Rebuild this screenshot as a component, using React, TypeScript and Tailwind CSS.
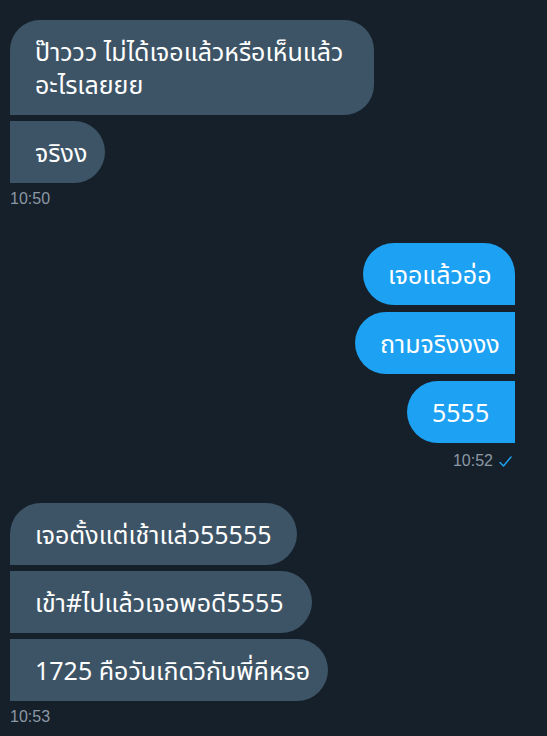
import React from "react";

const font = { fontFamily: '"Noto Sans Thai", "Noto Sans", "Liberation Sans", sans-serif' };

function Bubble({
  children,
  side,
  corners,
  width,
}: {
  children: React.ReactNode;
  side: "left" | "right";
  corners: string;
  width: string;
}) {
  const color = side === "left" ? "bg-[#3d5466]" : "bg-[#1da1f2]";
  return (
    <div
      className={`${color} ${corners} ${width} px-[25px] pt-[16.5px] pb-[12.5px] text-[25px] leading-[33px] text-white whitespace-nowrap`}
    >
      {children}
    </div>
  );
}

export default function App() {
  return (
    <div
      className="w-[547px] h-[736px] bg-[#16202a] overflow-hidden pt-[20px] pl-[10px] pr-[32px]"
      style={font}
    >
      <div className="flex flex-col items-start gap-[6px]">
        <Bubble side="left" width="w-[364px]" corners="rounded-[30px] rounded-bl-none">
          ป๊าววว ไม่ได้เจอแล้วหรือเห็นแล้ว
          <br />
          อะไรเลยยย
        </Bubble>
        <Bubble side="left" width="w-[95px]" corners="rounded-r-[31px]">
          จริงง
        </Bubble>
      </div>
      <div className="mt-[6px] text-[16px] leading-[20px] text-[#8b98a5]" style={{ fontFamily: '"Liberation Sans", sans-serif' }}>
        10:50
      </div>

      <div className="mt-[34px] flex flex-col items-end gap-[7px]">
        <Bubble side="right" width="w-[152px]" corners="rounded-[31px] rounded-br-none">
          เจอแล้วอ่อ
        </Bubble>
        <Bubble side="right" width="w-[160px]" corners="rounded-l-[31px]">
          ถามจริงงงง
        </Bubble>
        <Bubble side="right" width="w-[108px]" corners="rounded-l-[31px]">
          5555
        </Bubble>
      </div>
      <div
        className="mt-[8px] flex items-center justify-end gap-[6px] pr-[3px] text-[16px] leading-[20px] text-[#8b98a5]"
        style={{ fontFamily: '"Liberation Sans", sans-serif' }}
      >
        <span>10:52</span>
        <svg width="13" height="11" viewBox="0 0 13 11" fill="none">
          <path d="M1 6.5 L4.5 10 L12 1" stroke="#1da1f2" strokeWidth="1.5" strokeLinecap="round" strokeLinejoin="round" />
        </svg>
      </div>

      <div className="mt-[32px] flex flex-col items-start gap-[6px]">
        <Bubble side="left" width="w-[287px]" corners="rounded-[31px] rounded-bl-none">
          เจอตั้งแต่เช้าแล่ว55555
        </Bubble>
        <Bubble side="left" width="w-[302px]" corners="rounded-r-[31px]">
          เข้า#ไปแล้วเจอพอดี5555
        </Bubble>
        <Bubble side="left" width="w-[318px]" corners="rounded-r-[31px]">
          1725 คือวันเกิดวิกับพี่คีหรอ
        </Bubble>
      </div>
      <div className="mt-[6px] text-[16px] leading-[20px] text-[#8b98a5]" style={{ fontFamily: '"Liberation Sans", sans-serif' }}>
        10:53
      </div>
    </div>
  );
}
